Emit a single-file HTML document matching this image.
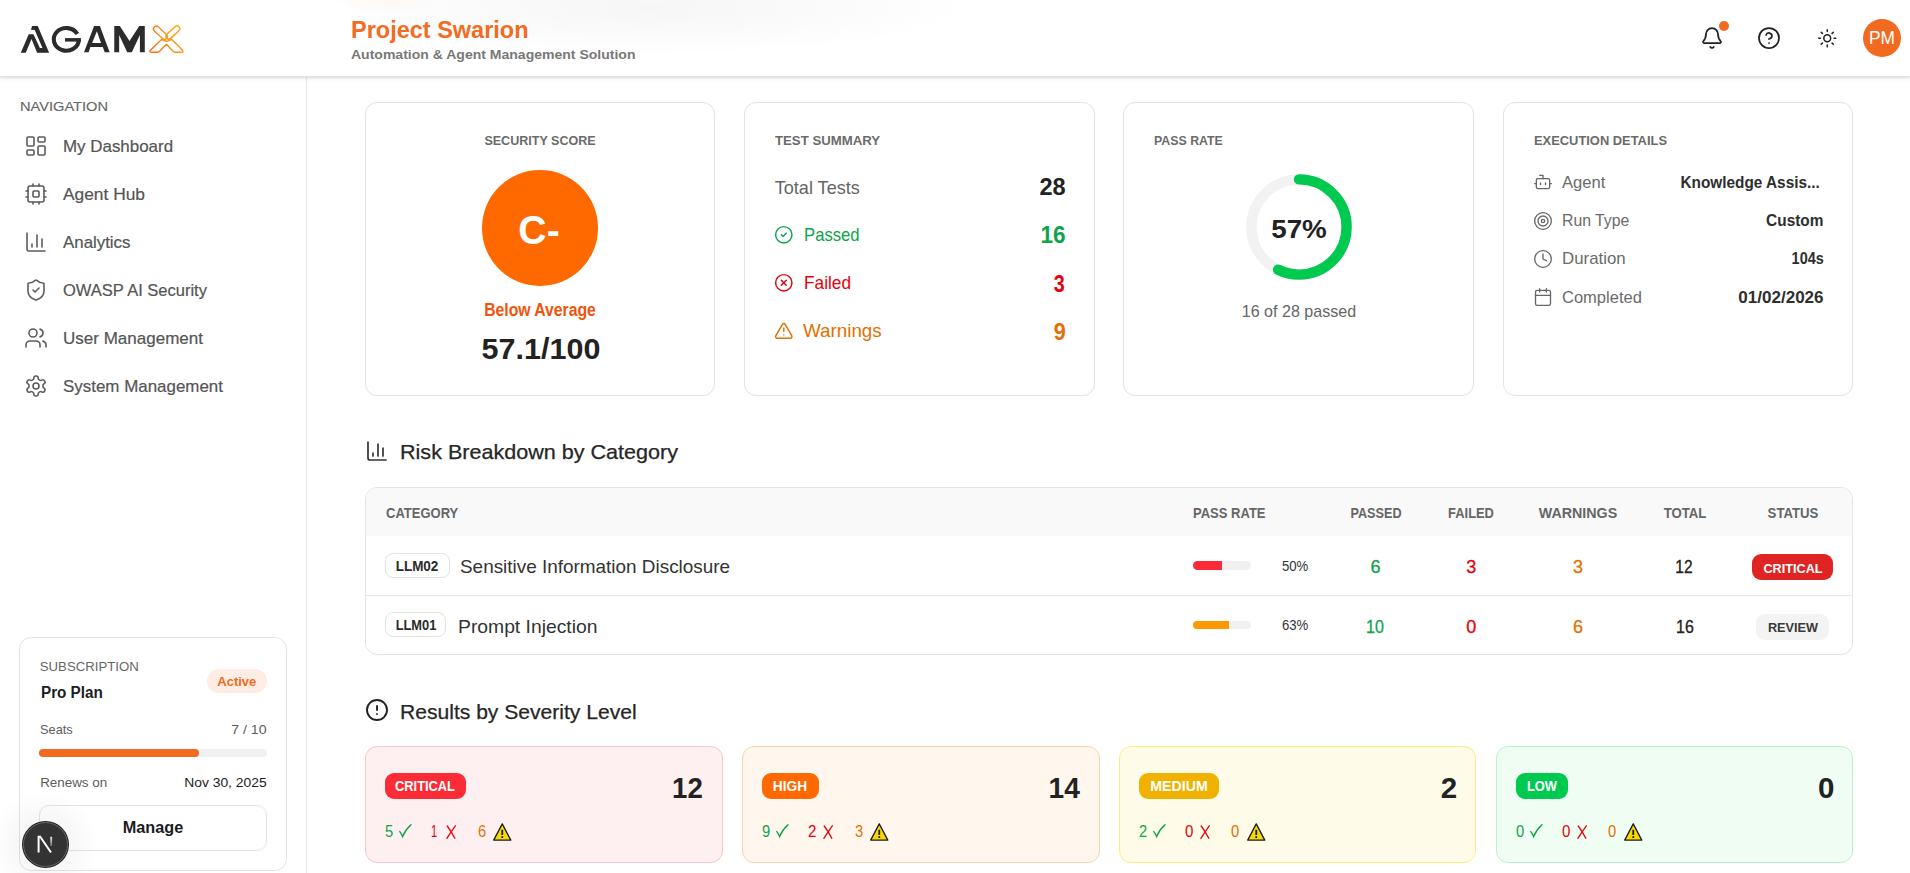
<!DOCTYPE html>
<html><head><meta charset="utf-8"><title>AGAMX</title>
<style>
html,body{margin:0;padding:0;}
body{width:1910px;height:873px;overflow:hidden;position:relative;background:#fff;font-family:"Liberation Sans",sans-serif;}
.t{position:absolute;line-height:1;white-space:nowrap;}
.b{position:absolute;box-sizing:border-box;}
.ic{position:absolute;overflow:visible;}
</style></head><body>
<div class="b" style="left:0px;top:0px;width:1910px;height:77px;background:#fff;box-shadow:0 1px 2px rgba(0,0,0,0.10),0 2px 6px rgba(0,0,0,0.05);border-bottom:1px solid #e4e4e4;z-index:2;"></div>
<div class="b" style="left:330px;top:-40px;width:640px;height:95px;background:radial-gradient(closest-side,rgba(0,0,0,0.035),rgba(0,0,0,0.015) 60%,rgba(0,0,0,0));z-index:2"></div>
<div class="b" style="left:330px;top:-25px;width:110px;height:40px;background:radial-gradient(closest-side,rgba(242,108,34,0.05),rgba(242,108,34,0));z-index:2"></div>
<svg class="ic" style="left:0;top:0;width:200px;height:76px;z-index:3" viewBox="0 0 200 76">
<defs><linearGradient id="lg" gradientUnits="userSpaceOnUse" x1="150" y1="52" x2="183" y2="26"><stop offset="0" stop-color="#f06a1c"/><stop offset="1" stop-color="#fdb813"/></linearGradient></defs>
<g fill="#2b2b2b" fill-rule="evenodd">
<path d="M20.79,52.7 L28.73,34.24 L33.46,34.24 L39.9,47.98 L42.47,47.98 L34.75,29.94 L30.88,29.73 L32.17,26.08 L37.75,26.08 L49.13,52.7 L37.11,52.7 L31.52,38.96 L25.73,52.7 Z"/>
<path d="M84.03,52.24 L94.1,26.03 L99.87,26.03 L109.66,52.24 L104.76,52.24 L102.75,47.05 L90.37,47.05 L88.64,52.24 Z M92.1,43.02 L96.9,31.2 L101,43.02 Z"/>
<path d="M114.27,52.24 L114.27,26.03 L119.8,26.03 L129.5,41.0 L139.3,26.03 L144.79,26.03 L144.79,52.24 L139.9,52.24 L139.9,35.0 L131.83,52.24 L127.2,52.24 L119.16,35.0 L119.16,52.24 Z"/>
</g>
<path d="M77.3,34.0 A12.5,11.3 0 1 0 78.8,39.4" fill="none" stroke="#2b2b2b" stroke-width="4.1"/>
<rect x="65" y="38.1" width="15.9" height="3.5" fill="#2b2b2b"/>
<g fill="none" stroke="url(#lg)" stroke-width="1.4" stroke-linejoin="round">
<path d="M150.2,50.6 L161.8,39.3 Q166.4,43.2 171.6,39.3 L182.6,50.3 Q183.6,52.1 181.7,52.2 L174.6,52.2 Q173.9,52.2 173.3,51.6 L166.4,44.3 L159.4,51.6 Q158.8,52.2 158.1,52.2 L151.2,52.2 Q149.3,52.1 150.2,50.6 Z"/>
<rect x="152.0" y="29.9" width="16.8" height="5.6" rx="2.8" transform="rotate(43 160.4 32.7)"/>
<rect x="164.5" y="29.7" width="16.8" height="5.6" rx="2.8" transform="rotate(-43 172.9 32.5)"/>
</g>
</svg>
<div class="t" style="top:17.66px;font-size:24.5px;font-weight:700;color:#f26c22;left:351.0px;transform-origin:0 0;transform:scaleX(0.9586);z-index:3;">Project Swarion</div>
<div class="t" style="top:48.24px;font-size:13.3px;font-weight:700;color:#787878;left:351px;transform-origin:0 0;transform:scaleX(1.0540);z-index:3;">Automation &amp; Agent Management Solution</div>
<svg class="ic" style="left:1700px;top:26px;width:24px;height:24px;z-index:3;" viewBox="0 0 24 24" fill="none" stroke="#222" stroke-width="1.75" stroke-linecap="round" stroke-linejoin="round"><path d="M10.268 21a2 2 0 0 0 3.464 0"/><path d="M3.262 15.326A1 1 0 0 0 4 17h16a1 1 0 0 0 .74-1.673C19.410 13.956 18 12.499 18 8A6 6 0 0 0 6 8c0 4.499-1.411 5.956-2.738 7.326"/></svg>
<div class="b" style="left:1719px;top:21px;width:10px;height:10px;border-radius:50%;background:#f26a1f;z-index:3"></div>
<svg class="ic" style="left:1757px;top:26px;width:24px;height:24px;z-index:3;" viewBox="0 0 24 24" fill="none" stroke="#222" stroke-width="1.75" stroke-linecap="round" stroke-linejoin="round"><circle cx="12" cy="12" r="10"/><path d="M9.090 9a3 3 0 0 1 5.830 1c0 2-3 3-3 3"/><path d="M12 17h.01"/></svg>
<svg class="ic" style="left:1816.5px;top:27.5px;width:20.5px;height:20.5px;z-index:3;" viewBox="0 0 24 24" fill="none" stroke="#222" stroke-width="1.8" stroke-linecap="round" stroke-linejoin="round"><circle cx="12" cy="12" r="4"/><path d="M12 2v2"/><path d="M12 20v2"/><path d="m4.930 4.930 1.410 1.410"/><path d="m17.660 17.660 1.410 1.410"/><path d="M2 12h2"/><path d="M20 12h2"/><path d="m6.340 17.660-1.410 1.410"/><path d="m19.070 4.930-1.410 1.410"/></svg>
<div class="b" style="left:1863px;top:19px;width:38px;height:38px;border-radius:50%;background:#f26a1f;z-index:3"></div>
<div class="t" style="top:30.09px;font-size:17.5px;font-weight:400;color:#fff;left:1582px;width:600px;text-align:center;transform-origin:50% 0;transform:scaleX(0.9905);z-index:3;">PM</div>
<div class="b" style="left:0px;top:77px;width:307px;height:796px;background:#fff;border-right:1px solid #e6e6e6;"></div>
<div class="t" style="top:99.74px;font-size:13.3px;font-weight:400;color:#666;-webkit-text-stroke:0.15px #666;left:19.8px;transform-origin:0 0;transform:scaleX(1.0993);">NAVIGATION</div>
<svg class="ic" style="left:24px;top:134px;width:24px;height:24px;" viewBox="0 0 24 24" fill="none" stroke="#5c5c5c" stroke-width="1.6" stroke-linecap="round" stroke-linejoin="round"><rect width="7" height="9" x="3" y="3" rx="1"/><rect width="7" height="5" x="14" y="3" rx="1"/><rect width="7" height="9" x="14" y="12" rx="1"/><rect width="7" height="5" x="3" y="16" rx="1"/></svg>
<div class="t" style="top:138.37px;font-size:16.1px;font-weight:400;color:#555;-webkit-text-stroke:0.2px #555;left:63.1px;transform-origin:0 0;transform:scaleX(1.0516);">My Dashboard</div>
<svg class="ic" style="left:24px;top:182px;width:24px;height:24px;" viewBox="0 0 24 24" fill="none" stroke="#5c5c5c" stroke-width="1.6" stroke-linecap="round" stroke-linejoin="round"><rect width="16" height="16" x="4" y="4" rx="2"/><rect width="6" height="6" x="9" y="9" rx="1"/><path d="M15 2v2"/><path d="M15 20v2"/><path d="M2 15h2"/><path d="M2 9h2"/><path d="M20 15h2"/><path d="M20 9h2"/><path d="M9 2v2"/><path d="M9 20v2"/></svg>
<div class="t" style="top:186.37px;font-size:16.1px;font-weight:400;color:#555;-webkit-text-stroke:0.2px #555;left:63.1px;transform-origin:0 0;transform:scaleX(1.0778);">Agent Hub</div>
<svg class="ic" style="left:24px;top:230px;width:24px;height:24px;" viewBox="0 0 24 24" fill="none" stroke="#5c5c5c" stroke-width="1.6" stroke-linecap="round" stroke-linejoin="round"><path d="M3 3v16a2 2 0 0 0 2 2h16"/><path d="M18 17V9"/><path d="M13 17V5"/><path d="M8 17v-3"/></svg>
<div class="t" style="top:234.37px;font-size:16.1px;font-weight:400;color:#555;-webkit-text-stroke:0.2px #555;left:63.1px;transform-origin:0 0;transform:scaleX(1.0478);">Analytics</div>
<svg class="ic" style="left:24px;top:278px;width:24px;height:24px;" viewBox="0 0 24 24" fill="none" stroke="#5c5c5c" stroke-width="1.6" stroke-linecap="round" stroke-linejoin="round"><path d="M20 13c0 5-3.500 7.500-7.660 8.950a1 1 0 0 1-.67-.01C7.500 20.500 4 18 4 13V6a1 1 0 0 1 1-1c2 0 4.500-1.200 6.240-2.720a1.170 1.170 0 0 1 1.520 0C14.510 3.810 17 5 19 5a1 1 0 0 1 1 1z"/><path d="m9 12 2 2 4-4"/></svg>
<div class="t" style="top:282.37px;font-size:16.1px;font-weight:400;color:#555;-webkit-text-stroke:0.2px #555;left:63.1px;transform-origin:0 0;transform:scaleX(1.0251);">OWASP AI Security</div>
<svg class="ic" style="left:24px;top:326px;width:24px;height:24px;" viewBox="0 0 24 24" fill="none" stroke="#5c5c5c" stroke-width="1.6" stroke-linecap="round" stroke-linejoin="round"><path d="M16 21v-2a4 4 0 0 0-4-4H6a4 4 0 0 0-4 4v2"/><circle cx="9" cy="7" r="4"/><path d="M22 21v-2a4 4 0 0 0-3-3.870"/><path d="M16 3.130a4 4 0 0 1 0 7.750"/></svg>
<div class="t" style="top:330.37px;font-size:16.1px;font-weight:400;color:#555;-webkit-text-stroke:0.2px #555;left:63.1px;transform-origin:0 0;transform:scaleX(1.0571);">User Management</div>
<svg class="ic" style="left:24px;top:374px;width:24px;height:24px;" viewBox="0 0 24 24" fill="none" stroke="#5c5c5c" stroke-width="1.6" stroke-linecap="round" stroke-linejoin="round"><path d="M12.220 2h-.44a2 2 0 0 0-2 2v.18a2 2 0 0 1-1 1.730l-.43.25a2 2 0 0 1-2 0l-.15-.08a2 2 0 0 0-2.730.73l-.22.38a2 2 0 0 0 .73 2.730l.15.1a2 2 0 0 1 1 1.720v.51a2 2 0 0 1-1 1.740l-.15.09a2 2 0 0 0-.73 2.730l.22.38a2 2 0 0 0 2.730.73l.15-.08a2 2 0 0 1 2 0l.43.25a2 2 0 0 1 1 1.730V20a2 2 0 0 0 2 2h.44a2 2 0 0 0 2-2v-.18a2 2 0 0 1 1-1.730l.43-.25a2 2 0 0 1 2 0l.15.08a2 2 0 0 0 2.730-.73l.22-.39a2 2 0 0 0-.73-2.730l-.15-.08a2 2 0 0 1-1-1.740v-.5a2 2 0 0 1 1-1.740l.15-.09a2 2 0 0 0 .73-2.730l-.22-.38a2 2 0 0 0-2.730-.73l-.15.08a2 2 0 0 1-2 0l-.43-.25a2 2 0 0 1-1-1.730V4a2 2 0 0 0-2-2z"/><circle cx="12" cy="12" r="3"/></svg>
<div class="t" style="top:378.37px;font-size:16.1px;font-weight:400;color:#555;-webkit-text-stroke:0.2px #555;left:63.1px;transform-origin:0 0;transform:scaleX(1.0518);">System Management</div>
<div class="b" style="left:19px;top:637px;width:268px;height:234px;border:1px solid #e3e3e3;border-radius:12px;background:#fff;"></div>
<div class="t" style="top:660.43px;font-size:13.2px;font-weight:400;color:#666;left:39.8px;transform-origin:0 0;">SUBSCRIPTION</div>
<div class="t" style="top:685.49px;font-size:15.6px;font-weight:700;color:#1c1c24;left:40.5px;transform-origin:0 0;transform:scaleX(0.9766);">Pro Plan</div>
<div class="b" style="left:206.7px;top:669px;width:60.19999999999999px;height:24px;background:#fdede4;border-radius:12px;"></div>
<div class="t" style="top:674.60px;font-size:13px;font-weight:700;color:#f26a1f;left:-63.19999999999999px;width:600px;text-align:center;transform-origin:50% 0;">Active</div>
<div class="t" style="top:722.66px;font-size:13.4px;font-weight:400;color:#5c5c5c;left:39.8px;transform-origin:0 0;transform:scaleX(0.9543);">Seats</div>
<div class="t" style="top:722.66px;font-size:13.4px;font-weight:400;color:#5c5c5c;right:1643.7px;text-align:right;transform-origin:100% 0;transform:scaleX(1.0559);">7 / 10</div>
<div class="b" style="left:39px;top:748.5px;width:228px;height:8.0px;background:#f0f0f0;border-radius:5px;"></div>
<div class="b" style="left:39px;top:748.5px;width:160px;height:8.0px;background:#f26a1f;border-radius:5px;"></div>
<div class="t" style="top:775.66px;font-size:13.4px;font-weight:400;color:#5c5c5c;left:40.2px;transform-origin:0 0;">Renews on</div>
<div class="t" style="top:775.66px;font-size:13.4px;font-weight:400;color:#1c1c24;right:1643.7px;text-align:right;transform-origin:100% 0;transform:scaleX(1.0350);">Nov 30, 2025</div>
<div class="b" style="left:39px;top:805px;width:228px;height:46px;border:1px solid #e3e3e3;border-radius:10px;background:#fff;"></div>
<div class="t" style="top:820.29px;font-size:15.6px;font-weight:700;color:#1c1c24;left:-146.6px;width:600px;text-align:center;transform-origin:50% 0;transform:scaleX(1.0416);">Manage</div>
<div class="b" style="left:-10px;top:790px;width:110px;height:110px;border-radius:50%;background:radial-gradient(closest-side,rgba(0,0,0,0.06),rgba(0,0,0,0));z-index:4"></div>
<div class="b" style="left:23px;top:821.7px;width:45px;height:45px;border-radius:50%;background:#333;border:1px solid #666;box-shadow:0 0 0 1px #222;z-index:5"></div>
<svg class="ic" style="left:36px;top:835px;width:18px;height:19px;z-index:6" viewBox="0 0 18 19"><defs><linearGradient id="ng" gradientUnits="userSpaceOnUse" x1="0" y1="1" x2="0" y2="12"><stop offset="0" stop-color="#fff"/><stop offset="1" stop-color="#fff" stop-opacity="0.2"/></linearGradient></defs><path d="M2.6 17.5V1.8h1.6L15 17.5" stroke="#fff" stroke-width="2" fill="none"/><path d="M15.2 1.8V11" stroke="url(#ng)" stroke-width="1.8"/></svg>
<div class="b" style="left:365px;top:102px;width:350px;height:294px;border:1px solid #e3e3e3;border-radius:12px;background:#fff;"></div>
<div class="b" style="left:744px;top:102px;width:351px;height:294px;border:1px solid #e3e3e3;border-radius:12px;background:#fff;"></div>
<div class="b" style="left:1123px;top:102px;width:351px;height:294px;border:1px solid #e3e3e3;border-radius:12px;background:#fff;"></div>
<div class="b" style="left:1503px;top:102px;width:350px;height:294px;border:1px solid #e3e3e3;border-radius:12px;background:#fff;"></div>
<div class="t" style="top:134.40px;font-size:13.7px;font-weight:700;color:#6b6b6b;left:240px;width:600px;text-align:center;transform-origin:50% 0;transform:scaleX(0.9157);">SECURITY SCORE</div>
<div class="b" style="left:482px;top:170px;width:115.5px;height:115.5px;border-radius:50%;background:#ff6900;"></div>
<div class="t" style="top:210.04px;font-size:40px;font-weight:700;color:#fff;left:239.29999999999995px;width:600px;text-align:center;transform-origin:50% 0;transform:scaleX(0.9809);">C-</div>
<div class="t" style="top:302.39px;font-size:17.5px;font-weight:700;color:#f0540c;left:240.29999999999995px;width:600px;text-align:center;transform-origin:50% 0;transform:scaleX(0.8996);">Below Average</div>
<div class="t" style="top:334.58px;font-size:29.2px;font-weight:700;color:#222;left:240.60000000000002px;width:600px;text-align:center;transform-origin:50% 0;transform:scaleX(1.0452);">57.1/100</div>
<div class="t" style="top:134.40px;font-size:13.7px;font-weight:700;color:#6b6b6b;left:774.8px;transform-origin:0 0;transform:scaleX(0.9643);">TEST SUMMARY</div>
<div class="t" style="top:178.58px;font-size:18.1px;font-weight:400;color:#666;left:774.7px;transform-origin:0 0;">Total Tests</div>
<div class="t" style="top:176.43px;font-size:23px;font-weight:700;color:#222;right:844.8px;text-align:right;transform-origin:100% 0;transform:scaleX(1.0241);">28</div>
<svg class="ic" style="left:773.8px;top:224.6px;width:19.6px;height:19.6px;" viewBox="0 0 24 24" fill="none" stroke="#0ea44a" stroke-width="1.8" stroke-linecap="round" stroke-linejoin="round"><circle cx="12" cy="12" r="10"/><path d="m9 12 2 2 4-4"/></svg>
<div class="t" style="top:226.83px;font-size:17.8px;font-weight:400;color:#0ea44a;left:803.8px;transform-origin:0 0;transform:scaleX(0.9382);">Passed</div>
<div class="t" style="top:224.03px;font-size:23px;font-weight:700;color:#0ea44a;right:844.5px;text-align:right;transform-origin:100% 0;transform:scaleX(0.9811);">16</div>
<svg class="ic" style="left:773.8px;top:272.7px;width:19.6px;height:19.6px;" viewBox="0 0 24 24" fill="none" stroke="#e7000b" stroke-width="1.8" stroke-linecap="round" stroke-linejoin="round"><circle cx="12" cy="12" r="10"/><path d="m15 9-6 6"/><path d="m9 9 6 6"/></svg>
<div class="t" style="top:274.73px;font-size:17.8px;font-weight:400;color:#e7000b;left:803.8px;transform-origin:0 0;transform:scaleX(0.9715);">Failed</div>
<div class="t" style="top:272.53px;font-size:23px;font-weight:700;color:#e7000b;right:845.5px;text-align:right;transform-origin:100% 0;transform:scaleX(0.8599);">3</div>
<svg class="ic" style="left:773.8px;top:320.6px;width:19.6px;height:19.6px;" viewBox="0 0 24 24" fill="none" stroke="#e17100" stroke-width="1.8" stroke-linecap="round" stroke-linejoin="round"><path d="m21.730 18-8-14a2 2 0 0 0-3.480 0l-8 14A2 2 0 0 0 4 21h16a2 2 0 0 0 1.730-3"/><path d="M12 9v4"/><path d="M12 17h.01"/></svg>
<div class="t" style="top:322.93px;font-size:17.8px;font-weight:400;color:#e17100;left:803px;transform-origin:0 0;transform:scaleX(1.0574);">Warnings</div>
<div class="t" style="top:320.63px;font-size:23px;font-weight:700;color:#e17100;right:844.5px;text-align:right;transform-origin:100% 0;transform:scaleX(0.9381);">9</div>
<div class="t" style="top:134.40px;font-size:13.7px;font-weight:700;color:#6b6b6b;left:1153.5px;transform-origin:0 0;transform:scaleX(0.9021);">PASS RATE</div>
<svg class="ic" style="left:1238.5px;top:167.3px;width:120px;height:120px" viewBox="0 0 120 120">
<circle cx="60" cy="60" r="47.6" stroke="#f2f2f2" stroke-width="10.4" fill="none"/>
<circle cx="60" cy="60" r="47.6" stroke="#00c950" stroke-width="10.4" fill="none" stroke-linecap="round" stroke-dasharray="170.89 299.08" transform="rotate(-90 60 60)"/>
</svg>
<div class="t" style="top:215.70px;font-size:26.7px;font-weight:700;color:#222;left:999px;width:600px;text-align:center;transform-origin:50% 0;transform:scaleX(1.0386);">57%</div>
<div class="t" style="top:302.71px;font-size:17px;font-weight:400;color:#666;left:999px;width:600px;text-align:center;transform-origin:50% 0;transform:scaleX(0.9464);">16 of 28 passed</div>
<div class="t" style="top:134.40px;font-size:13.7px;font-weight:700;color:#6b6b6b;left:1533.5px;transform-origin:0 0;transform:scaleX(0.9418);">EXECUTION DETAILS</div>
<svg class="ic" style="left:1532.6px;top:171.5px;width:20px;height:20px;" viewBox="0 0 24 24" fill="none" stroke="#666" stroke-width="1.6" stroke-linecap="round" stroke-linejoin="round"><path d="M12 8V4H8"/><rect width="16" height="12" x="4" y="8" rx="2"/><path d="M2 14h2"/><path d="M20 14h2"/><path d="M15 13v2"/><path d="M9 13v2"/></svg>
<div class="t" style="top:174.49px;font-size:16.2px;font-weight:400;color:#6b6b6b;left:1562.3px;transform-origin:0 0;transform:scaleX(1.0275);">Agent</div>
<div class="t" style="top:174.23px;font-size:16.5px;font-weight:700;color:#2e2e2e;right:89.90000000000009px;text-align:right;transform-origin:100% 0;transform:scaleX(0.9302);">Knowledge Assis...</div>
<svg class="ic" style="left:1532.6px;top:210.8px;width:20px;height:20px;" viewBox="0 0 24 24" fill="none" stroke="#666" stroke-width="1.6" stroke-linecap="round" stroke-linejoin="round"><circle cx="12" cy="12" r="10"/><circle cx="12" cy="12" r="6"/><circle cx="12" cy="12" r="2"/></svg>
<div class="t" style="top:212.19px;font-size:16.2px;font-weight:400;color:#6b6b6b;left:1562.3px;transform-origin:0 0;transform:scaleX(0.9761);">Run Type</div>
<div class="t" style="top:211.93px;font-size:16.5px;font-weight:700;color:#2e2e2e;right:86.70000000000005px;text-align:right;transform-origin:100% 0;transform:scaleX(0.9330);">Custom</div>
<svg class="ic" style="left:1532.6px;top:248.5px;width:20px;height:20px;" viewBox="0 0 24 24" fill="none" stroke="#666" stroke-width="1.6" stroke-linecap="round" stroke-linejoin="round"><circle cx="12" cy="12" r="10"/><polyline points="12 6 12 12 16 14"/></svg>
<div class="t" style="top:250.29px;font-size:16.2px;font-weight:400;color:#6b6b6b;left:1562.3px;transform-origin:0 0;transform:scaleX(1.0403);">Duration</div>
<div class="t" style="top:250.03px;font-size:16.5px;font-weight:700;color:#2e2e2e;right:86.70000000000005px;text-align:right;transform-origin:100% 0;transform:scaleX(0.8745);">104s</div>
<svg class="ic" style="left:1532.6px;top:286.6px;width:20px;height:20px;" viewBox="0 0 24 24" fill="none" stroke="#666" stroke-width="1.6" stroke-linecap="round" stroke-linejoin="round"><path d="M8 2v4"/><path d="M16 2v4"/><rect width="18" height="18" x="3" y="4" rx="2"/><path d="M3 10h18"/></svg>
<div class="t" style="top:288.79px;font-size:16.2px;font-weight:400;color:#6b6b6b;left:1562.3px;transform-origin:0 0;transform:scaleX(1.0199);">Completed</div>
<div class="t" style="top:288.53px;font-size:16.5px;font-weight:700;color:#2e2e2e;right:86.70000000000005px;text-align:right;transform-origin:100% 0;transform:scaleX(1.0329);">01/02/2026</div>
<svg class="ic" style="left:364.9px;top:439px;width:24px;height:24px;" viewBox="0 0 24 24" fill="none" stroke="#333" stroke-width="1.7" stroke-linecap="round" stroke-linejoin="round"><path d="M3 3v16a2 2 0 0 0 2 2h16"/><path d="M18 17V9"/><path d="M13 17V5"/><path d="M8 17v-3"/></svg>
<div class="t" style="top:442.10px;font-size:20.2px;font-weight:400;color:#262626;-webkit-text-stroke:0.25px #262626;left:399.7px;transform-origin:0 0;transform:scaleX(1.0681);">Risk Breakdown by Category</div>
<div class="b" style="left:365px;top:487px;width:1488px;height:168px;border:1px solid #e3e3e3;border-radius:12px;background:#fff;overflow:hidden;"></div>
<div class="b" style="left:366px;top:488px;width:1486px;height:48px;background:#f9f9f9;border-radius:11px 11px 0 0;"></div>
<div class="b" style="left:366px;top:595px;width:1486px;height:1px;background:#e6e6e6;"></div>
<div class="t" style="top:506.45px;font-size:14px;font-weight:700;color:#666;left:385.7px;transform-origin:0 0;transform:scaleX(0.9283);">CATEGORY</div>
<div class="t" style="top:506.45px;font-size:14px;font-weight:700;color:#666;left:1193.3px;transform-origin:0 0;transform:scaleX(0.9289);">PASS RATE</div>
<div class="t" style="top:506.45px;font-size:14px;font-weight:700;color:#666;left:1075.6px;width:600px;text-align:center;transform-origin:50% 0;transform:scaleX(0.9039);">PASSED</div>
<div class="t" style="top:506.45px;font-size:14px;font-weight:700;color:#666;left:1171.3px;width:600px;text-align:center;transform-origin:50% 0;transform:scaleX(0.9201);">FAILED</div>
<div class="t" style="top:506.45px;font-size:14px;font-weight:700;color:#666;left:1278.4px;width:600px;text-align:center;transform-origin:50% 0;transform:scaleX(1.0169);">WARNINGS</div>
<div class="t" style="top:506.45px;font-size:14px;font-weight:700;color:#666;left:1385.1px;width:600px;text-align:center;transform-origin:50% 0;transform:scaleX(0.9413);">TOTAL</div>
<div class="t" style="top:506.45px;font-size:14px;font-weight:700;color:#666;left:1492.8px;width:600px;text-align:center;transform-origin:50% 0;transform:scaleX(0.9421);">STATUS</div>
<div class="b" style="left:385.1px;top:553.3px;width:64.5px;height:25.200000000000045px;border:1px solid #e3e3e3;border-radius:8px;background:#fff;"></div>
<div class="t" style="top:559.45px;font-size:14px;font-weight:700;color:#2a2a2a;left:117.35000000000002px;width:600px;text-align:center;transform-origin:50% 0;transform:scaleX(0.9608);">LLM02</div>
<div class="t" style="top:557.54px;font-size:18.5px;font-weight:400;color:#333;left:459.8px;transform-origin:0 0;transform:scaleX(1.0221);">Sensitive Information Disclosure</div>
<div class="b" style="left:1192.8px;top:561px;width:58.0px;height:8.5px;background:#f0f0f0;border-radius:5px;"></div>
<div class="b" style="left:1192.8px;top:561px;width:29.0px;height:8.5px;background:#fb2c36;border-radius:5px 0 0 5px;"></div>
<div class="t" style="top:559.35px;font-size:14px;font-weight:400;color:#333;left:1281.5px;transform-origin:0 0;transform:scaleX(0.9386);">50%</div>
<div class="t" style="top:558.16px;font-size:18px;font-weight:400;color:#0ea44a;-webkit-text-stroke:0.3px #0ea44a;left:1075.4px;width:600px;text-align:center;transform-origin:50% 0;">6</div>
<div class="t" style="top:558.16px;font-size:18px;font-weight:400;color:#e7000b;-webkit-text-stroke:0.3px #e7000b;left:1171.2px;width:600px;text-align:center;transform-origin:50% 0;">3</div>
<div class="t" style="top:558.16px;font-size:18px;font-weight:400;color:#e17100;-webkit-text-stroke:0.3px #e17100;left:1278px;width:600px;text-align:center;transform-origin:50% 0;">3</div>
<div class="t" style="top:558.16px;font-size:18px;font-weight:400;color:#222;-webkit-text-stroke:0.3px #222;left:1384.4px;width:600px;text-align:center;transform-origin:50% 0;transform:scaleX(0.8641);">12</div>
<div class="b" style="left:1751.8px;top:553.8px;width:81.10000000000014px;height:26.300000000000068px;background:#e02424;border-radius:9px;"></div>
<div class="t" style="top:561.66px;font-size:13.4px;font-weight:700;color:#fff;left:1492.6px;width:600px;text-align:center;transform-origin:50% 0;transform:scaleX(0.9468);">CRITICAL</div>
<div class="b" style="left:385.1px;top:612.4px;width:61.19999999999999px;height:25.100000000000023px;border:1px solid #e3e3e3;border-radius:8px;background:#fff;"></div>
<div class="t" style="top:618.35px;font-size:14px;font-weight:700;color:#2a2a2a;left:115.70000000000005px;width:600px;text-align:center;transform-origin:50% 0;transform:scaleX(0.9180);">LLM01</div>
<div class="t" style="top:617.64px;font-size:18.5px;font-weight:400;color:#333;left:457.9px;transform-origin:0 0;transform:scaleX(1.0436);">Prompt Injection</div>
<div class="b" style="left:1192.8px;top:620.5px;width:58.0px;height:8.5px;background:#f0f0f0;border-radius:5px;"></div>
<div class="b" style="left:1192.8px;top:620.5px;width:36.200000000000045px;height:8.5px;background:#fe9a00;border-radius:5px 0 0 5px;"></div>
<div class="t" style="top:618.15px;font-size:14px;font-weight:400;color:#333;left:1281.5px;transform-origin:0 0;transform:scaleX(0.9386);">63%</div>
<div class="t" style="top:618.16px;font-size:18px;font-weight:400;color:#0ea44a;-webkit-text-stroke:0.3px #0ea44a;left:1075.4px;width:600px;text-align:center;transform-origin:50% 0;transform:scaleX(0.8890);">10</div>
<div class="t" style="top:618.16px;font-size:18px;font-weight:400;color:#e7000b;-webkit-text-stroke:0.3px #e7000b;left:1171.2px;width:600px;text-align:center;transform-origin:50% 0;">0</div>
<div class="t" style="top:618.16px;font-size:18px;font-weight:400;color:#e17100;-webkit-text-stroke:0.3px #e17100;left:1278px;width:600px;text-align:center;transform-origin:50% 0;">6</div>
<div class="t" style="top:618.16px;font-size:18px;font-weight:400;color:#222;-webkit-text-stroke:0.3px #222;left:1384.6px;width:600px;text-align:center;transform-origin:50% 0;transform:scaleX(0.8890);">16</div>
<div class="b" style="left:1755.8px;top:613.9px;width:73.0px;height:25.800000000000068px;background:#f3f3f3;border-radius:9px;"></div>
<div class="t" style="top:620.76px;font-size:13.4px;font-weight:700;color:#3a3a3a;left:1492.5px;width:600px;text-align:center;transform-origin:50% 0;transform:scaleX(0.9497);">REVIEW</div>
<svg class="ic" style="left:365px;top:697.9px;width:24px;height:24px;" viewBox="0 0 24 24" fill="none" stroke="#222" stroke-width="1.9" stroke-linecap="round" stroke-linejoin="round"><circle cx="12" cy="12" r="10"/><line x1="12" x2="12" y1="8" y2="12"/><line x1="12" x2="12.010" y1="16" y2="16"/></svg>
<div class="t" style="top:701.85px;font-size:20.5px;font-weight:400;color:#262626;-webkit-text-stroke:0.25px #262626;left:399.7px;transform-origin:0 0;transform:scaleX(1.0280);">Results by Severity Level</div>
<div class="b" style="left:365.3px;top:746px;width:357.3px;height:116.79999999999995px;background:#fef0f0;border:1px solid #ffc6c6;border-radius:12px;"></div>
<div class="b" style="left:385.0px;top:772.9px;width:80.80000000000001px;height:26.0px;background:#fb2c36;border-radius:9px;"></div>
<div class="t" style="top:779.15px;font-size:14px;font-weight:700;color:#fff;left:125.39999999999998px;width:600px;text-align:center;transform-origin:50% 0;transform:scaleX(0.9170);">CRITICAL</div>
<div class="t" style="top:773.03px;font-size:29.5px;font-weight:700;color:#222;right:1207.2px;text-align:right;transform-origin:100% 0;transform:scaleX(0.9387);">12</div>
<div class="t" style="top:822.83px;font-size:16.5px;font-weight:400;color:#0ea44a;left:385.0px;transform-origin:0 0;transform:scaleX(0.8936);">5</div>
<svg class="ic" style="left:398.8px;top:824px;width:12.5px;height:13.5px" viewBox="0 0 12.5 13.5"><path d="M0.8 7.6 Q2.2 9.2 3.6 12.6 Q6.5 5.5 12 0.8" stroke="#0ea44a" stroke-width="1.4" fill="none" stroke-linecap="round"/></svg>
<div class="t" style="top:822.83px;font-size:16.5px;font-weight:400;color:#e7000b;left:430.70000000000005px;transform-origin:0 0;transform:scaleX(0.6756);">1</div>
<svg class="ic" style="left:445.8px;top:824.6px;width:10px;height:14px" viewBox="0 0 10 14"><path d="M1.2 1 Q5 6 8.8 13.3 M9.3 0.8 Q5.5 6 0.9 13.4" stroke="#e7000b" stroke-width="1.3" fill="none" stroke-linecap="round"/></svg>
<div class="t" style="top:822.83px;font-size:16.5px;font-weight:400;color:#e17100;left:477.5px;transform-origin:0 0;transform:scaleX(0.8936);">6</div>
<svg class="ic" style="left:492.9px;top:822.8px;width:18.5px;height:18px" viewBox="0 0 18.5 18"><path d="M9.25 0.9 L17.8 17.1 L0.7 17.1 Z" fill="#f7d900" stroke="#1a1a1a" stroke-width="1.3" stroke-linejoin="round"/><path d="M9.25 6.8 V12" stroke="#1a1a1a" stroke-width="1.8"/><rect x="8.35" y="13.2" width="1.8" height="1.8" fill="#1a1a1a"/></svg>
<div class="b" style="left:742.4px;top:746px;width:357.69999999999993px;height:116.79999999999995px;background:#fff6ed;border:1px solid #ffd3a3;border-radius:12px;"></div>
<div class="b" style="left:762.1px;top:772.9px;width:56.60000000000002px;height:26.0px;background:#ff6900;border-radius:9px;"></div>
<div class="t" style="top:779.15px;font-size:14px;font-weight:700;color:#fff;left:490.4px;width:600px;text-align:center;transform-origin:50% 0;transform:scaleX(0.9800);">HIGH</div>
<div class="t" style="top:773.03px;font-size:29.5px;font-weight:700;color:#222;right:829.7px;text-align:right;transform-origin:100% 0;transform:scaleX(0.9508);">14</div>
<div class="t" style="top:822.83px;font-size:16.5px;font-weight:400;color:#0ea44a;left:762.1px;transform-origin:0 0;transform:scaleX(0.8936);">9</div>
<svg class="ic" style="left:775.9px;top:824px;width:12.5px;height:13.5px" viewBox="0 0 12.5 13.5"><path d="M0.8 7.6 Q2.2 9.2 3.6 12.6 Q6.5 5.5 12 0.8" stroke="#0ea44a" stroke-width="1.4" fill="none" stroke-linecap="round"/></svg>
<div class="t" style="top:822.83px;font-size:16.5px;font-weight:400;color:#e7000b;left:807.8px;transform-origin:0 0;transform:scaleX(0.9154);">2</div>
<svg class="ic" style="left:822.9px;top:824.6px;width:10px;height:14px" viewBox="0 0 10 14"><path d="M1.2 1 Q5 6 8.8 13.3 M9.3 0.8 Q5.5 6 0.9 13.4" stroke="#e7000b" stroke-width="1.3" fill="none" stroke-linecap="round"/></svg>
<div class="t" style="top:822.83px;font-size:16.5px;font-weight:400;color:#e17100;left:854.6px;transform-origin:0 0;transform:scaleX(0.8936);">3</div>
<svg class="ic" style="left:870.0px;top:822.8px;width:18.5px;height:18px" viewBox="0 0 18.5 18"><path d="M9.25 0.9 L17.8 17.1 L0.7 17.1 Z" fill="#f7d900" stroke="#1a1a1a" stroke-width="1.3" stroke-linejoin="round"/><path d="M9.25 6.8 V12" stroke="#1a1a1a" stroke-width="1.8"/><rect x="8.35" y="13.2" width="1.8" height="1.8" fill="#1a1a1a"/></svg>
<div class="b" style="left:1119.2px;top:746px;width:356.5px;height:116.79999999999995px;background:#fefbe8;border:1px solid #ffeb80;border-radius:12px;"></div>
<div class="b" style="left:1138.9px;top:772.9px;width:80.09999999999991px;height:26.0px;background:#f0b100;border-radius:9px;"></div>
<div class="t" style="top:779.15px;font-size:14px;font-weight:700;color:#fff;left:878.95px;width:600px;text-align:center;transform-origin:50% 0;transform:scaleX(1.0128);">MEDIUM</div>
<div class="t" style="top:773.03px;font-size:29.5px;font-weight:700;color:#222;right:452.9000000000001px;text-align:right;transform-origin:100% 0;">2</div>
<div class="t" style="top:822.83px;font-size:16.5px;font-weight:400;color:#0ea44a;left:1138.9px;transform-origin:0 0;transform:scaleX(0.8936);">2</div>
<svg class="ic" style="left:1152.7px;top:824px;width:12.5px;height:13.5px" viewBox="0 0 12.5 13.5"><path d="M0.8 7.6 Q2.2 9.2 3.6 12.6 Q6.5 5.5 12 0.8" stroke="#0ea44a" stroke-width="1.4" fill="none" stroke-linecap="round"/></svg>
<div class="t" style="top:822.83px;font-size:16.5px;font-weight:400;color:#e7000b;left:1184.6000000000001px;transform-origin:0 0;transform:scaleX(0.9154);">0</div>
<svg class="ic" style="left:1199.7px;top:824.6px;width:10px;height:14px" viewBox="0 0 10 14"><path d="M1.2 1 Q5 6 8.8 13.3 M9.3 0.8 Q5.5 6 0.9 13.4" stroke="#e7000b" stroke-width="1.3" fill="none" stroke-linecap="round"/></svg>
<div class="t" style="top:822.83px;font-size:16.5px;font-weight:400;color:#e17100;left:1231.4px;transform-origin:0 0;transform:scaleX(0.8936);">0</div>
<svg class="ic" style="left:1246.8px;top:822.8px;width:18.5px;height:18px" viewBox="0 0 18.5 18"><path d="M9.25 0.9 L17.8 17.1 L0.7 17.1 Z" fill="#f7d900" stroke="#1a1a1a" stroke-width="1.3" stroke-linejoin="round"/><path d="M9.25 6.8 V12" stroke="#1a1a1a" stroke-width="1.8"/><rect x="8.35" y="13.2" width="1.8" height="1.8" fill="#1a1a1a"/></svg>
<div class="b" style="left:1496.2px;top:746px;width:356.39999999999986px;height:116.79999999999995px;background:#effdf3;border:1px solid #b6f5cb;border-radius:12px;"></div>
<div class="b" style="left:1515.9px;top:772.9px;width:52.40000000000009px;height:26.0px;background:#00c950;border-radius:9px;"></div>
<div class="t" style="top:779.15px;font-size:14px;font-weight:700;color:#fff;left:1242.1000000000001px;width:600px;text-align:center;transform-origin:50% 0;transform:scaleX(0.9187);">LOW</div>
<div class="t" style="top:773.03px;font-size:29.5px;font-weight:700;color:#222;right:75.60000000000014px;text-align:right;transform-origin:100% 0;">0</div>
<div class="t" style="top:822.83px;font-size:16.5px;font-weight:400;color:#0ea44a;left:1515.9px;transform-origin:0 0;transform:scaleX(0.8936);">0</div>
<svg class="ic" style="left:1529.7px;top:824px;width:12.5px;height:13.5px" viewBox="0 0 12.5 13.5"><path d="M0.8 7.6 Q2.2 9.2 3.6 12.6 Q6.5 5.5 12 0.8" stroke="#0ea44a" stroke-width="1.4" fill="none" stroke-linecap="round"/></svg>
<div class="t" style="top:822.83px;font-size:16.5px;font-weight:400;color:#e7000b;left:1561.6000000000001px;transform-origin:0 0;transform:scaleX(0.9154);">0</div>
<svg class="ic" style="left:1576.7px;top:824.6px;width:10px;height:14px" viewBox="0 0 10 14"><path d="M1.2 1 Q5 6 8.8 13.3 M9.3 0.8 Q5.5 6 0.9 13.4" stroke="#e7000b" stroke-width="1.3" fill="none" stroke-linecap="round"/></svg>
<div class="t" style="top:822.83px;font-size:16.5px;font-weight:400;color:#e17100;left:1608.4px;transform-origin:0 0;transform:scaleX(0.8936);">0</div>
<svg class="ic" style="left:1623.8px;top:822.8px;width:18.5px;height:18px" viewBox="0 0 18.5 18"><path d="M9.25 0.9 L17.8 17.1 L0.7 17.1 Z" fill="#f7d900" stroke="#1a1a1a" stroke-width="1.3" stroke-linejoin="round"/><path d="M9.25 6.8 V12" stroke="#1a1a1a" stroke-width="1.8"/><rect x="8.35" y="13.2" width="1.8" height="1.8" fill="#1a1a1a"/></svg>
</body></html>
